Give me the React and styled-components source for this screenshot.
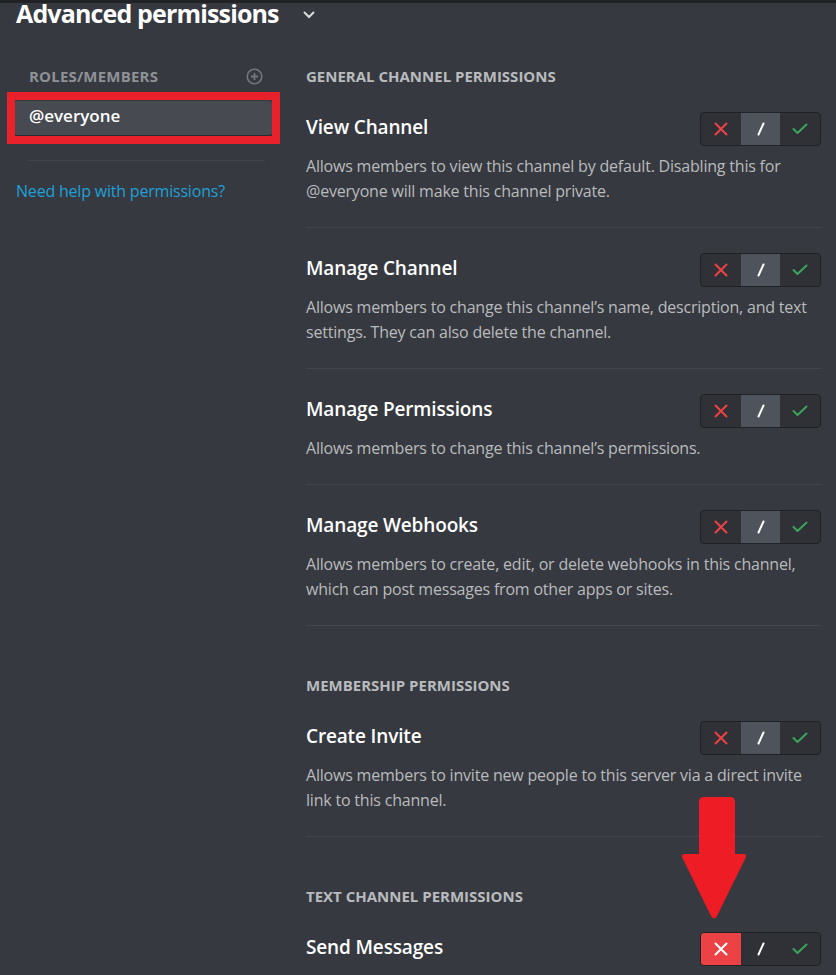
import React from "react";
import styled, { createGlobalStyle } from "styled-components";

const Global = createGlobalStyle`
  html, body { margin: 0; padding: 0; background: #36393f; }
  body { font-family: "Open Sans", "Noto Sans", sans-serif; overflow: hidden; }
  * { box-sizing: border-box; }
`;

const Page = styled.div`
  width: 836px;
  height: 975px;
  background: #36393f;
  border-top: 3px solid #202225;
  overflow: hidden;
`;

const Header = styled.div`
  display: flex;
  align-items: center;
  height: 20px;
  padding-left: 16px;
`;

const Title = styled.h1`
  margin: 0;
  font-size: 25px;
  line-height: 20px;
  font-weight: 700;
  color: #ffffff;
  letter-spacing: -0.85px;
`;

const Chevron = styled.svg`
  margin-left: 24px;
  margin-top: 4px;
`;

const Columns = styled.div`
  display: grid;
  grid-template-columns: 290px 1fr;
`;

const Sidebar = styled.aside`
  padding: 44px 18px 0 14px;
`;

const SideHeading = styled.div`
  display: flex;
  align-items: center;
  justify-content: space-between;
  height: 18px;
  padding: 0 9px 0 15px;
  font-size: 15px;
  font-weight: 700;
  color: #8e9297;
  text-transform: uppercase;
  letter-spacing: 0.2px;
`;

const RoleItem = styled.div`
  position: relative;
  margin-top: 16px;
  height: 34px;
  display: flex;
  align-items: center;
  padding: 0 0 5px 15px;
  background: #474a50;
  border-radius: 3px;
  box-shadow: -1px 2px 2px rgba(0, 0, 0, 0.25);
  font-size: 17px;
  font-weight: 600;
  color: #ffffff;
  &::after {
    content: "";
    position: absolute;
    top: -9px;
    left: -7px;
    right: -8px;
    bottom: -9px;
    border: 8px solid #e8212a;
  }
`;

const SideDivider = styled.div`
  height: 1px;
  background: #42454b;
  margin: 25px 7px 0 14px;
`;

const HelpLink = styled.a`
  display: block;
  margin: 20px 0 0 2px;
  font-size: 16px;
  line-height: 20px;
  color: #1fa0d8;
  text-decoration: none;
  letter-spacing: -0.2px;
`;

const Main = styled.main`
  padding: 44px 15px 0 16px;
`;

const Section = styled.section`
  & + & { margin-top: 50px; }
`;

const SectionHeading = styled.h2`
  margin: 0 0 2px;
  font-size: 15px;
  line-height: 18px;
  font-weight: 700;
  color: #b9bbbe;
  text-transform: uppercase;
  letter-spacing: 0;
`;

const Row = styled.div`
  padding: 25px 0 23px;
  border-bottom: 1px solid #43464c;
`;

const RowHead = styled.div`
  display: flex;
  align-items: center;
  justify-content: space-between;
  height: 34px;
`;

const PermName = styled.div`
  font-size: 19px;
  font-weight: 600;
  color: #ffffff;
  letter-spacing: -0.15px;
  margin-top: -4px;
`;

const Desc = styled.p`
  margin: 8px 0 0;
  font-size: 16px;
  line-height: 25px;
  color: #b9bbbe;
  max-width: 505px;
  letter-spacing: -0.2px;
`;

const ToggleWrap = styled.div`
  position: relative;
`;

const Toggle = styled.div`
  display: flex;
  width: 121px;
  height: 34px;
  border: 1px solid #202225;
  border-radius: 4px;
  background: #2f3136;
  overflow: hidden;
`;

const Seg = styled.div`
  flex: 1;
  display: flex;
  align-items: center;
  justify-content: center;
  background: ${(p) => (p.$bg ? p.$bg : "transparent")};
`;

const Arrow = styled.svg`
  position: absolute;
  left: -19px;
  top: -136px;
`;

const XIcon = ({ color }) => (
  <svg width="14" height="14" viewBox="0 0 14 14">
    <path d="M1.5 1.5 L12.5 12.5 M12.5 1.5 L1.5 12.5" stroke={color} strokeWidth="2" strokeLinecap="round" fill="none" />
  </svg>
);

const SlashIcon = () => (
  <svg width="10" height="14" viewBox="0 0 10 14">
    <path d="M2.5 12.5 L7.5 1.5" stroke="#ffffff" strokeWidth="2" strokeLinecap="round" fill="none" />
  </svg>
);

const CheckIcon = () => (
  <svg width="16" height="12" viewBox="0 0 16 12">
    <path d="M1.5 6 L5.5 10 L14.5 1.5" stroke="#3ba55c" strokeWidth="2" strokeLinecap="round" strokeLinejoin="round" fill="none" />
  </svg>
);

const PermToggle = ({ state, arrow }) => (
  <ToggleWrap>
    <Toggle>
      <Seg $bg={state === "deny" ? "#ed4245" : null}>
        <XIcon color={state === "deny" ? "#ffffff" : "#ed4245"} />
      </Seg>
      <Seg $bg={state === "neutral" ? "#4f545c" : null}>
        <SlashIcon />
      </Seg>
      <Seg $bg={state === "allow" ? "#3ba55c" : null}>
        <CheckIcon />
      </Seg>
    </Toggle>
    {arrow && (
      <Arrow width="66" height="124" viewBox="0 0 66 124">
        <path
          d="M18 6 Q18 1 23 1 L49 1 Q54 1 54 6 L54 58 L62 58 Q67 58 64 63 L36 120 Q33 125 30 120 L2 63 Q-1 58 4 58 L18 58 Z"
          fill="#ee1c25"
        />
      </Arrow>
    )}
  </ToggleWrap>
);

const sections = [
  {
    title: "General Channel Permissions",
    rows: [
      {
        name: "View Channel",
        desc: "Allows members to view this channel by default. Disabling this for @everyone will make this channel private.",
      },
      {
        name: "Manage Channel",
        desc: "Allows members to change this channel’s name, description, and text settings. They can also delete the channel.",
      },
      {
        name: "Manage Permissions",
        desc: "Allows members to change this channel’s permissions.",
      },
      {
        name: "Manage Webhooks",
        desc: "Allows members to create, edit, or delete webhooks in this channel, which can post messages from other apps or sites.",
      },
    ],
  },
  {
    title: "Membership Permissions",
    rows: [
      {
        name: "Create Invite",
        desc: "Allows members to invite new people to this server via a direct invite link to this channel.",
      },
    ],
  },
  {
    title: "Text Channel Permissions",
    rows: [
      {
        name: "Send Messages",
        desc: "Allows members to send messages in this channel.",
        state: "deny",
        arrow: true,
      },
    ],
  },
];

export default function App() {
  return (
    <Page>
      <Global />
      <Header>
        <Title>Advanced permissions</Title>
        <Chevron width="12" height="8" viewBox="0 0 12 8">
          <path d="M1.5 1.5 L6 6 L10.5 1.5" stroke="#dcddde" strokeWidth="2" fill="none" strokeLinecap="round" />
        </Chevron>
      </Header>
      <Columns>
        <Sidebar>
          <SideHeading>
            <span>Roles/Members</span>
            <svg width="17" height="17" viewBox="0 0 17 17">
              <circle cx="8.5" cy="8.5" r="7.3" stroke="#72767d" strokeWidth="1.6" fill="none" />
              <path d="M8.5 5 V12 M5 8.5 H12" stroke="#72767d" strokeWidth="1.8" />
            </svg>
          </SideHeading>
          <RoleItem>@everyone</RoleItem>
          <SideDivider />
          <HelpLink href="#">Need help with permissions?</HelpLink>
        </Sidebar>
        <Main>
          {sections.map((s) => (
            <Section key={s.title}>
              <SectionHeading>{s.title}</SectionHeading>
              {s.rows.map((r) => (
                <Row key={r.name}>
                  <RowHead>
                    <PermName>{r.name}</PermName>
                    <PermToggle state={r.state || "neutral"} arrow={r.arrow} />
                  </RowHead>
                  <Desc>{r.desc}</Desc>
                </Row>
              ))}
            </Section>
          ))}
        </Main>
      </Columns>
    </Page>
  );
}
